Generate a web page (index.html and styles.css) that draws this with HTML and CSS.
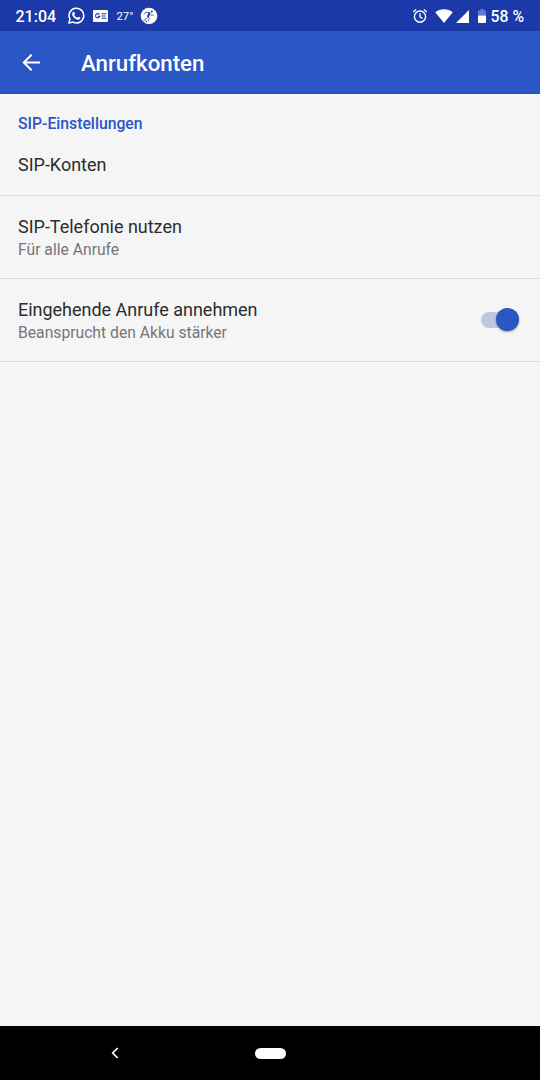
FILE: index.html
```html
<!DOCTYPE html>
<html lang="de">
<head>
  <meta charset="UTF-8" />
  <meta name="viewport" content="width=device-width, initial-scale=1.0" />
  <title>Anrufkonten</title>
  <link rel="stylesheet" href="styles.css">
</head>
<body>
  <div class="screen">
    <!-- Status bar -->
    <div class="status-bar">
      <div class="time">21:04</div>
      <svg class="whatsapp" viewBox="0 0 24 24" width="18" height="18">
        <path d="M2.500 21.500l1.500-5.300A9.800 9.800 0 1 1 7.800 20z" fill="none" stroke="#fff" stroke-width="2" stroke-linejoin="round" />
        <path d="M8.300 6.800c.5-.5 1.200-.4 1.500.2l.8 1.800c.2.7-.5 1.200-1 1.800 1 1.900 2.300 3 4.200 3.800.6-.6 1.100-1.500 1.800-1.200l1.900.9c.5.3.4 1.200 0 1.700-1.200 1.600-3.100 1.500-5.300.5-2.700-1.300-4.700-3.600-5.300-5.800-.4-1.500.3-2.800 1.400-3.700z" fill="#fff" />
      </svg>
      <svg class="news" viewBox="0 0 15 12" width="15" height="12">
        <rect width="15" height="12" rx="1" fill="#fff" />
        <path d="M6.400 4.500A2.100 2.100 0 1 0 6.700 6.400H5M8.500 3.700h4.700M8.500 6h4M8.500 8.300h4.700" fill="none" stroke="#1b39a9" stroke-width="1.100" />
      </svg>
      <div class="temperature">27°</div>
      <svg class="runner" viewBox="0 0 18 18" width="18" height="18">
        <circle cx="9" cy="9" r="8.300" fill="#fff" />
        <circle cx="11.800" cy="4.400" r="1" fill="#1b39a9" />
        <path d="M4 7.300L5.800 5.200l3.700.5M10.300 8l3.200.3M7.800 10.500L2.800 14.500" fill="none" stroke="#1b39a9" stroke-width=".8" />
        <path d="M9.800 5.400L7.800 9.800" stroke="#1b39a9" stroke-width="2" />
        <path d="M7.800 9.500l1.700 1.900-1.500 2.800" fill="none" stroke="#1b39a9" stroke-width=".8" />
        <circle cx="6.500" cy="14.500" r=".8" fill="#1b39a9" />
      </svg>
      <svg class="alarm" viewBox="0 0 16 16" width="16" height="16">
        <circle cx="8" cy="8.600" r="5.600" fill="none" stroke="#fff" stroke-width="1.400" />
        <path d="M8 5.300v3.600l2.500 1.600M1.200 4l3-2.500M14.800 4l-3-2.500" fill="none" stroke="#fff" stroke-width="1.300" />
      </svg>
      <svg class="wifi" viewBox="0 0 18 14" width="18" height="14">
        <path d="M9 14L.2 3.200C5-.9 13-.9 17.800 3.200z" fill="#fff" />
      </svg>
      <svg class="signal" viewBox="0 0 13 13" width="13" height="13">
        <path d="M13 0v13H0z" fill="#fff" />
      </svg>
      <svg class="battery" viewBox="0 0 8 14" width="8" height="14">
        <path d="M2.300 0h3.400v1.400H8V6.500H0V1.400h2.300z" fill="#667bc8" />
        <path d="M0 6.500h8v6.700q0 .8-.8.8H.8q-.8 0-.8-.8z" fill="#fff" />
      </svg>
      <div class="percent">58 %</div>
    </div>

    <!-- App bar -->
    <div class="app-bar">
      <svg class="back" viewBox="0 0 18 18" width="18" height="18">
        <path d="M18 8.500H2M9.600.7L1.800 8.500l7.800 7.800" fill="none" stroke="#fff" stroke-width="2" />
      </svg>
      <h1>Anrufkonten</h1>
    </div>

    <!-- Settings -->
    <div class="settings">
      <h2>SIP-Einstellungen</h2>
      <div class="item single">
        <div class="item-title">SIP-Konten</div>
      </div>
      <div class="item">
        <div>
          <div class="item-title">SIP-Telefonie nutzen</div>
          <div class="item-summary">Für alle Anrufe</div>
        </div>
      </div>
      <div class="item">
        <div>
          <div class="item-title">Eingehende Anrufe annehmen</div>
          <div class="item-summary">Beansprucht den Akku stärker</div>
        </div>
        <div class="switch"><div class="thumb"></div></div>
      </div>
    </div>

    <!-- Navigation -->
    <div class="nav-bar">
      <svg class="nav-back" viewBox="0 0 8 12" width="8" height="12">
        <path d="M6.700 1L1.700 6l5 5" fill="none" stroke="#fff" stroke-width="1.700" />
      </svg>
      <div class="home-pill"></div>
    </div>
  </div>
</body>
</html>
```
FILE: styles.css
```css
* {
  box-sizing: border-box;
  margin: 0;
  padding: 0;
}

body {
  font-family: Roboto, sans-serif;
  background: #f5f5f5;
  color: #2b2c2e;
}

.screen {
  display: flex;
  flex-direction: column;
  height: 100vh;
}

.status-bar {
  display: flex;
  align-items: center;
  height: 31px;
  padding: 1px 16px 0 15.5px;
  background: #1b39a9;
  color: white;
}

.time {
  width: 51px;
  font-size: 16px;
  font-weight: 500;
}

.news {
  margin-left: 8px;
}

.temperature {
  width: 23px;
  margin-left: 9px;
  font-size: 11.3px;
}

.alarm {
  margin-left: auto;
}

.wifi {
  margin-left: 7px;
}

.signal {
  margin-left: 3px;
}

.battery {
  margin-left: 9px;
}

.percent {
  margin-left: 5px;
  font-size: 15.75px;
  font-weight: 500;
}

.app-bar {
  display: flex;
  align-items: center;
  height: 63px;
  padding: 1px 22px 0;
  background: #2a56c6;
  border-bottom: 1px solid #2550b9;
  color: white;
}

.app-bar h1 {
  margin-left: 41px;
  font-size: 22.25px;
  font-weight: 500;
}

.settings {
  flex: 1;
}

.settings h2 {
  height: 42px;
  padding: 20px 18px 0;
  font-size: 15.75px;
  line-height: 20px;
  font-weight: 500;
  color: #2a56c6;
}

.item {
  display: flex;
  align-items: center;
  justify-content: space-between;
  height: 83px;
  padding: 0 21.5px 0 18px;
  border-bottom: 1px solid #dcdcdc;
}

.item.single {
  height: 60px;
  padding-bottom: 1px;
}

.item-title {
  font-size: 17.98px;
  line-height: 24px;
}

.item-summary {
  font-size: 15.7px;
  line-height: 21px;
  color: #75767a;
}

.switch {
  display: flex;
  align-items: center;
  justify-content: flex-end;
  width: 37.5px;
  height: 16px;
  margin-bottom: 1px;
  border-radius: 8px;
  background: linear-gradient(to right, #bfc8df 30px, transparent 30px);
}

.thumb {
  width: 23px;
  height: 23px;
  border-radius: 50%;
  background: #2a56c6;
  box-shadow: 0 1px 2px rgba(0, 0, 0, 0.35);
}

.nav-bar {
  display: flex;
  align-items: center;
  height: 54px;
  padding-left: 111px;
  background: #000;
}

.home-pill {
  width: 31px;
  height: 11px;
  margin-left: 136px;
  border-radius: 6px;
  background: white;
}
```
